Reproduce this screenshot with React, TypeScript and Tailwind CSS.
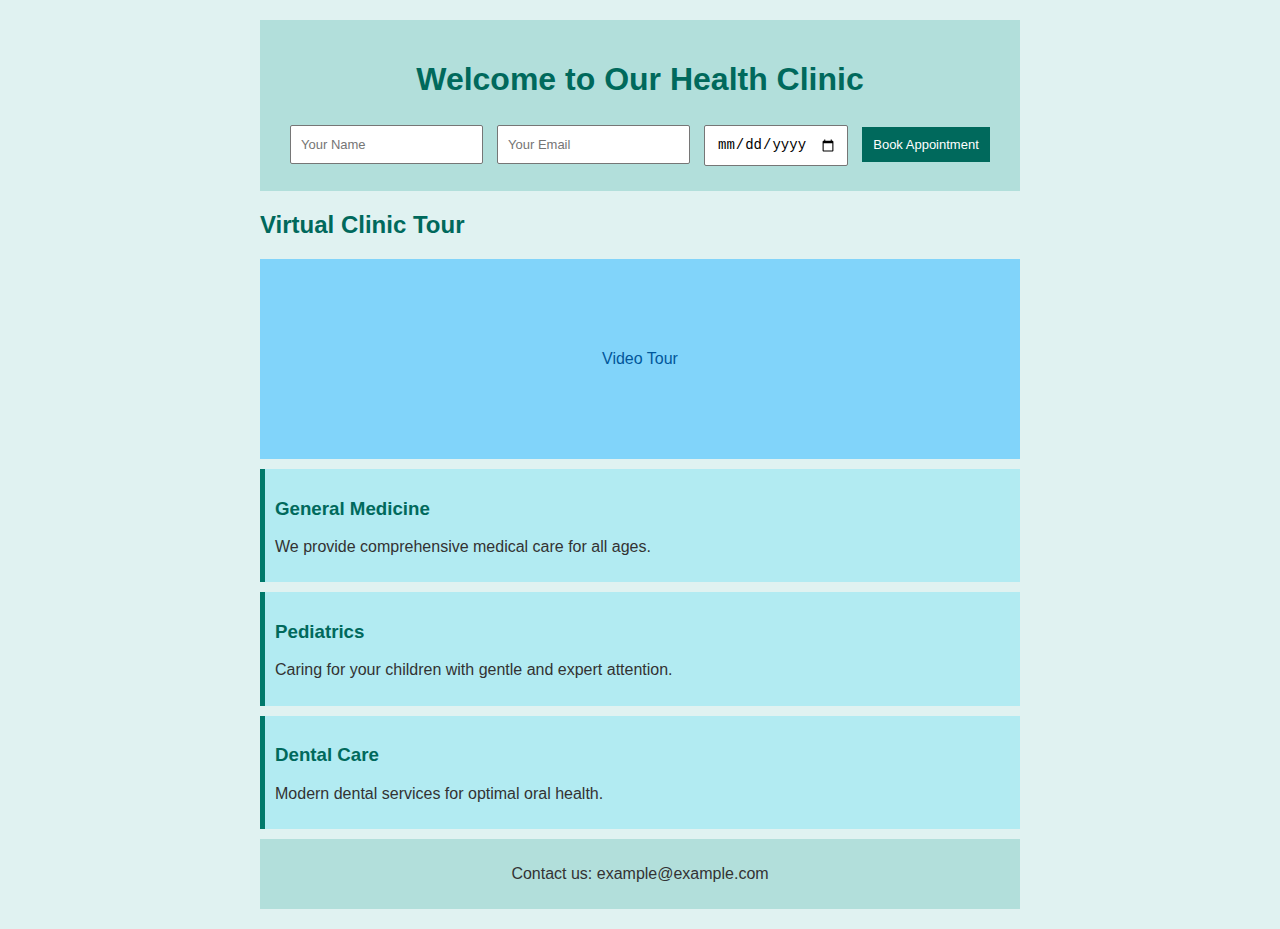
import React from 'react';

/* ─── Data ─────────────────────────────────────────────────────────── */
const services = [
  { title: 'General Medicine', text: 'We provide comprehensive medical care for all ages.' },
  { title: 'Pediatrics', text: 'Caring for your children with gentle and expert attention.' },
  { title: 'Dental Care', text: 'Modern dental services for optimal oral health.' },
];

/* ─── Component ────────────────────────────────────────────────────── */
export default function App() {
  return (
    <div className="min-h-[929px] bg-[#e0f2f1] pt-[20px] pb-[20px] font-['Liberation_Sans',Arial,sans-serif] text-[#333]">
      <div className="mx-auto w-[760px]">
        {/* Header with booking form */}
        <header className="bg-[#b2dfdb] px-[30px] pt-[41px] pb-[25px]">
          <h1 className="mb-[27px] text-center text-[32px] leading-[37px] font-bold text-[#00695c]">
            Welcome to Our Health Clinic
          </h1>
          <form className="flex items-start gap-[14px]" onSubmit={(e) => e.preventDefault()}>
            <input
              type="text"
              placeholder="Your Name"
              className="h-[39px] w-[193px] rounded-[2px] border border-[#767676] bg-white px-[10px] text-[13px] placeholder:text-[#757575]"
            />
            <input
              type="email"
              placeholder="Your Email"
              className="h-[39px] w-[193px] rounded-[2px] border border-[#767676] bg-white px-[10px] text-[13px] placeholder:text-[#757575]"
            />
            <input
              type="date"
              className="h-[41px] w-[144px] rounded-[2px] border border-[#767676] bg-white pr-[10px] pl-[12px] font-['Liberation_Mono',monospace] text-[14px] text-black"
            />
            <button
              type="submit"
              className="mt-[2px] h-[35px] w-[128px] bg-[#00695c] text-[13px] text-white"
            >
              Book Appointment
            </button>
          </form>
        </header>

        {/* Tour */}
        <h2 className="mt-[20px] mb-[20px] text-[24px] leading-[28px] font-bold text-[#00695c]">
          Virtual Clinic Tour
        </h2>
        <div className="flex h-[200px] items-center justify-center bg-[#81d4fa] text-[16px] text-[#01579b]">
          Video Tour
        </div>

        {/* Services */}
        {services.map((s) => (
          <section key={s.title} className="mt-[10px] border-l-[5px] border-[#00796b] bg-[#b2ebf2] p-[10px]">
            <h3 className="my-[18.72px] text-[18.72px] leading-[21.5px] font-bold text-[#00695c]">{s.title}</h3>
            <p className="my-4 text-[16px] leading-[18.4px] text-[#333]">{s.text}</p>
          </section>
        ))}

        {/* Footer */}
        <footer className="mt-[10px] flex h-[70px] items-center justify-center bg-[#b2dfdb] text-[16px] text-[#333]">
          Contact us: example@example.com
        </footer>
      </div>
    </div>
  );
}
